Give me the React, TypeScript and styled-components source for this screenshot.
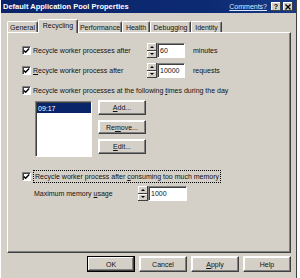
import React from 'react';
import styled, { createGlobalStyle } from 'styled-components';

const GlobalStyle = createGlobalStyle`
body {
    margin: 0;
    background: #ffffff;
    font-family: "Liberation Sans", Arial, sans-serif;
    font-size: 7px;
    color: #111;
}
`;

const Window = styled.div`
width: 297px;
height: 278px;
box-sizing: border-box;
background: #d4d0c8;
border-left: 1px solid #ffffff;
border-right: 1px solid #404040;
display: flex;
flex-direction: column;
`;

const TitleBar = styled.div`
height: 13px;
display: flex;
align-items: center;
padding: 0 3px 0 2px;
background: linear-gradient(90deg, #0a246a 0%, #0c2a72 70%, #173a86 100%);
color: #fff;
`;

const Title = styled.span`
font-weight: bold;
font-size: 7.5px;
flex: 1;
`;

const HelpLink = styled.span`
color: #dfe8fa;
text-decoration: underline;
margin-right: 2px;
`;

const CaptionButton = styled.div`
width: 10px;
height: 9px;
box-sizing: border-box;
margin-left: 2px;
background: #d4d0c8;
box-shadow: inset -1px -1px #404040, inset 1px 1px #ffffff;
color: #000;
font-weight: bold;
font-size: 7px;
display: flex;
align-items: center;
justify-content: center;
`;

const Body = styled.div`
padding: 0 0 0 6px;
`;

const TabStrip = styled.div`
margin-top: 6px;
height: 13px;
display: flex;
align-items: flex-end;
`;

const Tab = styled.div<{ $w: number; $active?: boolean }>`
width: ${p => p.$w}px;
height: ${p => (p.$active ? 14 : 11)}px;
margin-bottom: ${p => (p.$active ? -1 : 0)}px;
padding-bottom: ${p => (p.$active ? 2 : 0)}px;
box-sizing: border-box;
position: relative;
z-index: ${p => (p.$active ? 1 : 0)};
background: #d4d0c8;
border-top: 1px solid #ffffff;
border-left: 1px solid #ffffff;
border-right: 1px solid #404040;
border-radius: 2px 2px 0 0;
box-shadow: inset -1px 0 #808080;
display: flex;
align-items: center;
justify-content: center;
white-space: nowrap;
`;

const Panel = styled.div`
width: 284px;
height: 221px;
box-sizing: border-box;
border: 1px solid;
border-color: #ffffff #404040 #404040 #ffffff;
box-shadow: inset -1px -1px #808080;
padding: 10px 0 0 14px;
display: flex;
flex-direction: column;
`;

const Row = styled.div<{ $mt?: number; $indent?: number }>`
display: flex;
align-items: center;
height: 15px;
margin-top: ${p => p.$mt ?? 0}px;
padding-left: ${p => p.$indent ?? 0}px;
`;

const CheckBox = styled.div`
width: 9px;
height: 9px;
box-sizing: border-box;
background: #fff;
border: 1px solid;
border-color: #808080 #ffffff #ffffff #808080;
box-shadow: inset 1px 1px #404040;
display: flex;
align-items: center;
justify-content: center;
flex-shrink: 0;
`;

const Label = styled.span<{ $w?: number }>`
margin-left: 2px;
width: ${p => (p.$w ? `${p.$w}px` : 'auto')};
white-space: nowrap;
`;

const FocusLabel = styled.span`
margin-left: 2px;
height: 13px;
line-height: 11px;
box-sizing: border-box;
border: 1px dotted #000;
padding: 0 1px;
white-space: nowrap;
`;

const PlainLabel = styled.span<{ $w: number }>`
width: ${p => p.$w}px;
white-space: nowrap;
`;

const SpinBox = styled.div`
width: 10px;
height: 15px;
display: flex;
flex-direction: column;
flex-shrink: 0;
`;

const SpinButton = styled.div<{ $down?: boolean }>`
flex: 1;
background: #d4d0c8;
box-shadow: inset -1px -1px #404040, inset 1px 1px #ffffff;
display: flex;
align-items: center;
justify-content: center;
&::after {
    content: '';
    border-left: 2px solid transparent;
    border-right: 2px solid transparent;
    ${p => (p.$down ? 'border-top: 2px solid #000;' : 'border-bottom: 2px solid #000;')}
}
`;

const TextBox = styled.div<{ $w: number }>`
width: ${p => p.$w}px;
height: 15px;
box-sizing: border-box;
background: #fff;
border: 1px solid;
border-color: #808080 #ffffff #ffffff #808080;
box-shadow: inset 1px 1px #404040;
padding-left: 2px;
display: flex;
align-items: center;
`;

const Unit = styled.span`
margin-left: 8px;
`;

const TimesBlock = styled.div`
display: flex;
margin-top: 2px;
padding-left: 13px;
`;

const ListBox = styled.div`
width: 57px;
height: 56px;
margin-top: 1px;
box-sizing: border-box;
background: #fff;
border: 1px solid;
border-color: #808080 #ffffff #ffffff #808080;
box-shadow: inset 1px 1px #404040;
padding: 1px 0 0 1px;
`;

const ListItem = styled.div<{ $selected?: boolean }>`
height: 10px;
padding-left: 1px;
display: flex;
align-items: center;
background: ${p => (p.$selected ? '#0a246a' : 'transparent')};
color: ${p => (p.$selected ? '#fff' : '#000')};
`;

const ButtonColumn = styled.div`
margin-left: 6px;
display: flex;
flex-direction: column;
gap: 5px;
`;

const Button = styled.div<{ $w?: number; $h?: number; $default?: boolean }>`
width: ${p => p.$w ?? 48}px;
height: ${p => p.$h ?? 15}px;
box-sizing: border-box;
background: #d4d0c8;
border: 1px solid ${p => (p.$default ? '#000' : 'transparent')};
box-shadow: ${p =>
    p.$default
        ? 'inset -1px -1px #404040, inset 1px 1px #ffffff, inset -2px -2px #808080'
        : 'inset -1px -1px #808080, inset 1px 1px #ffffff'};
${p => (p.$default ? '' : 'border-color: #fff #404040 #404040 #fff;')}
display: flex;
align-items: center;
justify-content: center;
white-space: nowrap;
`;

const Footer = styled.div`
width: 284px;
margin-top: 3px;
display: flex;
justify-content: flex-end;
gap: 4px;
`;

const U = styled.span`
text-decoration: underline;
`;

const Check = () => (
    <svg width="7" height="7" viewBox="0 0 7 7">
        <path d="M0.8 3.4 L2.6 5.2 L6.2 1.4" fill="none" stroke="#000" strokeWidth="1.4" />
    </svg>
);

const CloseGlyph = () => (
    <svg width="6" height="6" viewBox="0 0 6 6">
        <path d="M0.5 0.5 L5.5 5.5 M5.5 0.5 L0.5 5.5" stroke="#000" strokeWidth="1.3" />
    </svg>
);

const Spinner = () => (
    <SpinBox>
        <SpinButton />
        <SpinButton $down />
    </SpinBox>
);

const tabs = [
    { name: 'General', w: 31 },
    { name: 'Recycling', w: 40, active: true },
    { name: 'Performance', w: 44 },
    { name: 'Health', w: 28 },
    { name: 'Debugging', w: 41 },
    { name: 'Identity', w: 31 },
];

export default function App() {
    return (
        <>
            <GlobalStyle />
            <Window>
                <TitleBar>
                    <Title>Default Application Pool Properties</Title>
                    <HelpLink>Comments?</HelpLink>
                    <CaptionButton>?</CaptionButton>
                    <CaptionButton><CloseGlyph /></CaptionButton>
                </TitleBar>
                <Body>
                    <TabStrip>
                        {tabs.map(t => (
                            <Tab key={t.name} $w={t.w} $active={t.active}>{t.name}</Tab>
                        ))}
                    </TabStrip>
                    <Panel>
                        <Row>
                            <CheckBox><Check /></CheckBox>
                            <Label $w={114}>Recycle worker processes after</Label>
                            <Spinner />
                            <TextBox $w={28}>60</TextBox>
                            <Unit>minutes</Unit>
                        </Row>
                        <Row $mt={5}>
                            <CheckBox><Check /></CheckBox>
                            <Label $w={114}><U>R</U>ecycle worker process after</Label>
                            <Spinner />
                            <TextBox $w={28}>10000</TextBox>
                            <Unit>requests</Unit>
                        </Row>
                        <Row $mt={5}>
                            <CheckBox><Check /></CheckBox>
                            <Label>Recycle worker processes at the following <U>t</U>imes during the day</Label>
                        </Row>
                        <TimesBlock>
                            <ListBox>
                                <ListItem $selected>09:17</ListItem>
                            </ListBox>
                            <ButtonColumn>
                                <Button><U>A</U>dd...</Button>
                                <Button $h={14}>Re<U>m</U>ove...</Button>
                                <Button><U>E</U>dit...</Button>
                            </ButtonColumn>
                        </TimesBlock>
                        <Row $mt={12}>
                            <CheckBox><Check /></CheckBox>
                            <FocusLabel>Recycle worker process after <U>c</U>onsuming too much memory</FocusLabel>
                        </Row>
                        <Row $mt={2} $indent={12}>
                            <PlainLabel $w={104}>Maximum memory <U>u</U>sage</PlainLabel>
                            <Spinner />
                            <TextBox $w={39}>1000</TextBox>
                        </Row>
                    </Panel>
                    <Footer>
                        <Button $h={16} $default>OK</Button>
                        <Button $h={16}>Cancel</Button>
                        <Button $h={16}><U>A</U>pply</Button>
                        <Button $h={16}>Help</Button>
                    </Footer>
                </Body>
            </Window>
        </>
    );
}
